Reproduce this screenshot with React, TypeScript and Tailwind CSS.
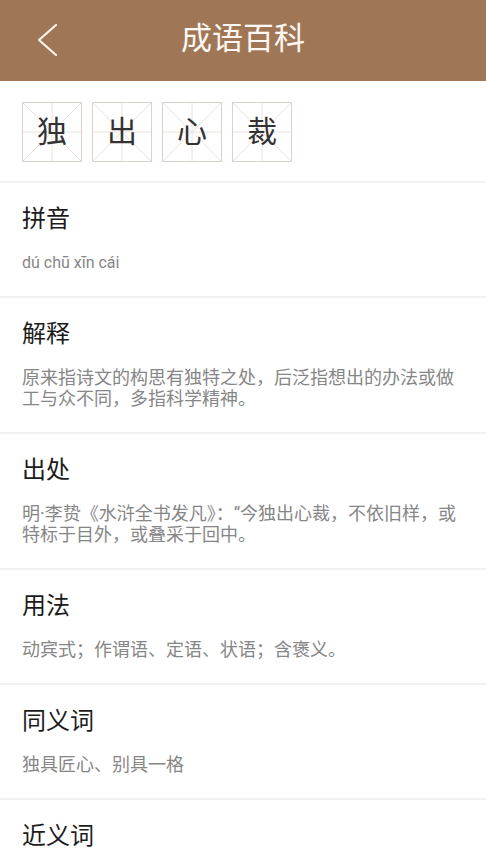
import React from "react";

const sections = [
  { title: "拼音", body: "dú chū xīn cái" },
  { title: "解释", body: "原来指诗文的构思有独特之处，后泛指想出的办法或做工与众不同，多指科学精神。" },
  { title: "出处", body: "明·李贽《水浒全书发凡》：“今独出心裁，不依旧样，或特标于目外，或叠采于回中。" },
  { title: "用法", body: "动宾式；作谓语、定语、状语；含褒义。" },
  { title: "同义词", body: "独具匠心、别具一格" },
  { title: "近义词", body: "" },
];

function GridChar({ ch }: { ch: string }) {
  return (
    <div className="relative flex h-[60px] w-[60px] items-center justify-center border border-[#ddd0cc]">
      <svg className="absolute inset-0 h-full w-full" viewBox="0 0 58 58" preserveAspectRatio="none">
        <line x1="0" y1="0" x2="58" y2="58" stroke="#ebe2df" strokeWidth="1" />
        <line x1="58" y1="0" x2="0" y2="58" stroke="#ebe2df" strokeWidth="1" />
        <line x1="29" y1="0" x2="29" y2="58" stroke="#ebe2df" strokeWidth="1" />
        <line x1="0" y1="29" x2="58" y2="29" stroke="#ebe2df" strokeWidth="1" />
      </svg>
      <span className="relative text-[30px] leading-none text-[#333333]">{ch}</span>
    </div>
  );
}

export default function App() {
  return (
    <div
      className="h-screen overflow-hidden bg-white"
      style={{ fontFamily: 'Roboto, "Noto Sans CJK SC", sans-serif' }}
    >
      {/* header */}
      <div className="relative flex h-[81px] items-center justify-center bg-[#a07756]">
        <svg className="absolute left-[37px] top-[24px]" width="20" height="32" viewBox="0 0 20 32">
          <polyline points="19,1 2,16 19,31" fill="none" stroke="#fdf6f0" strokeWidth="2.2" strokeLinecap="round" strokeLinejoin="round" />
        </svg>
        <div className="-mt-[4px] text-[31px] leading-none text-[#fdf8f4]">成语百科</div>
      </div>

      {/* idiom boxes */}
      <div className="flex gap-[10px] px-[22px] pt-[21px] pb-[19px]">
        {["独", "出", "心", "裁"].map((c) => (
          <GridChar key={c} ch={c} />
        ))}
      </div>

      {sections.map((s) => (
        <div key={s.title} className="border-t-2 border-[#f2f2f2] pl-[22px] pr-[22px] pt-[20px] pb-[23px]">
          <div className="h-[32px] text-[24px] leading-[32px] text-[#1c1c1c]">{s.title}</div>
          {s.body && (
            <div
              className={
                s.title === "拼音"
                  ? "mt-[17px] text-[16px] leading-[21px] text-[#868686]"
                  : "mt-[17px] text-[18px] leading-[21px] text-[#868686]"
              }
            >
              {s.body}
            </div>
          )}
        </div>
      ))}
    </div>
  );
}
